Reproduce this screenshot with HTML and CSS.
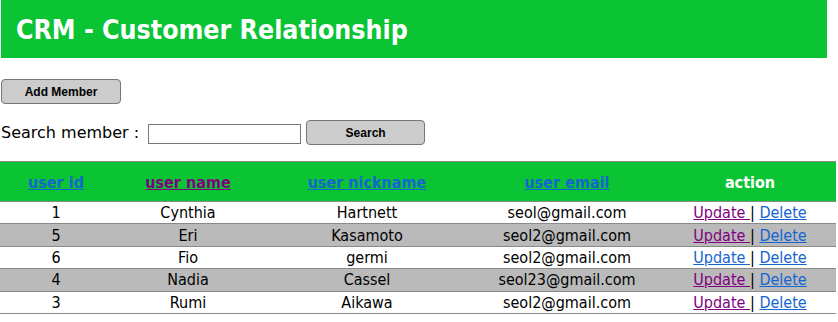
FILE: index.html
```html
<!DOCTYPE html>
<html>
	<head>
		<title>CRM - Customer Relationship</title>
		<meta name="viewport" content="width=device-width" />
		<link rel="stylesheet" href="styles.css">
	</head>
	<body>

		<div class="banner">
			<h1>CRM - Customer Relationship</h1>
		</div>

		<div class="toolbar">
			<button class="btn btn-add">Add Member</button>
		</div>

		<form class="search" onsubmit="return false">
			<label for="keyword">Search member :</label>
			<input id="keyword" type="text" class="search-input" />
			<button class="btn btn-search">Search</button>
		</form>

		<table class="members">
			<colgroup>
				<col style="width: 112px">
				<col style="width: 152px">
				<col style="width: 206px">
				<col style="width: 194px">
				<col style="width: 172px">
			</colgroup>
			<thead>
				<tr>
					<th><a href="#id">user id</a></th>
					<th><a href="#name" class="visited">user name</a></th>
					<th><a href="#nickname">user nickname</a></th>
					<th><a href="#email">user email</a></th>
					<th>action</th>
				</tr>
			</thead>
			<tbody>
				<tr>
					<td>1</td>
					<td>Cynthia</td>
					<td>Hartnett</td>
					<td>seol@gmail.com</td>
					<td><a href="#u1" class="visited">Update </a> | <a href="#d1">Delete</a></td>
				</tr>
				<tr>
					<td>5</td>
					<td>Eri</td>
					<td>Kasamoto</td>
					<td>seol2@gmail.com</td>
					<td><a href="#u5" class="visited">Update </a> | <a href="#d5">Delete</a></td>
				</tr>
				<tr>
					<td>6</td>
					<td>Fio</td>
					<td>germi</td>
					<td>seol2@gmail.com</td>
					<td><a href="#u6">Update </a> | <a href="#d6">Delete</a></td>
				</tr>
				<tr>
					<td>4</td>
					<td>Nadia</td>
					<td>Cassel</td>
					<td>seol23@gmail.com</td>
					<td><a href="#u4" class="visited">Update </a> | <a href="#d4">Delete</a></td>
				</tr>
				<tr>
					<td>3</td>
					<td>Rumi</td>
					<td>Aikawa</td>
					<td>seol2@gmail.com</td>
					<td><a href="#u3" class="visited">Update </a> | <a href="#d3">Delete</a></td>
				</tr>
			</tbody>
		</table>

	</body>
</html>
```

FILE: styles.css
```css
* {
	margin: 0;
	padding: 0;
	box-sizing: border-box;
}

html, body {
	background: #fff;
	color: #000;
	font-family: "DejaVu Sans", Verdana, sans-serif;
	font-size: 16px;
}

a {
	color: #1565d0;
}

a.visited {
	color: #800080;
}

.banner {
	display: flex;
	align-items: center;
	width: 826px;
	height: 58px;
	margin-left: 1px;
	padding-left: 15px;
	background: #0ac434;
}

.banner h1 {
	color: #fff;
	font-family: "DejaVu Sans Condensed", "DejaVu Sans", sans-serif;
	font-size: 26.5px;
	font-weight: bold;
}

.toolbar {
	padding: 21px 0 0 1px;
}

.btn {
	background: #ccc;
	border: 1px solid #767676;
	border-radius: 4px;
	color: #000;
	font-family: "Liberation Sans", Arial, sans-serif;
	font-size: 12px;
	font-weight: bold;
	height: 25px;
}

.btn-add {
	width: 120px;
}

.btn-search {
	width: 119px;
	margin-left: 5px;
}

.search {
	display: flex;
	align-items: center;
	margin-top: 16px;
	padding-left: 1px;
	height: 25px;
}

.search label {
	margin-right: 9px;
}

.search-input {
	width: 153px;
	height: 20px;
	border: 1px solid #767676;
	margin-top: 2px;
}

.members {
	margin-top: 16px;
	width: 836px;
	border-collapse: collapse;
	table-layout: fixed;
	text-align: center;
}

.members th {
	background: #0ac434;
	color: #fff;
	font-family: "DejaVu Sans Condensed", "DejaVu Sans", sans-serif;
	font-size: 16px;
	font-weight: bold;
	height: 40px;
	border-top: 1px solid #8a8a8a;
	border-bottom: 1px solid #8a8a8a;
	padding-top: 2px;
}

.members td {
	font-family: "DejaVu Sans Condensed", "DejaVu Sans", sans-serif;
	font-size: 16px;
	line-height: 21px;
	height: 22.4px;
	padding: 0;
	border-bottom: 1px solid #8a8a8a;
}

.members tbody tr:nth-child(even) td {
	background: #bababa;
}
```
